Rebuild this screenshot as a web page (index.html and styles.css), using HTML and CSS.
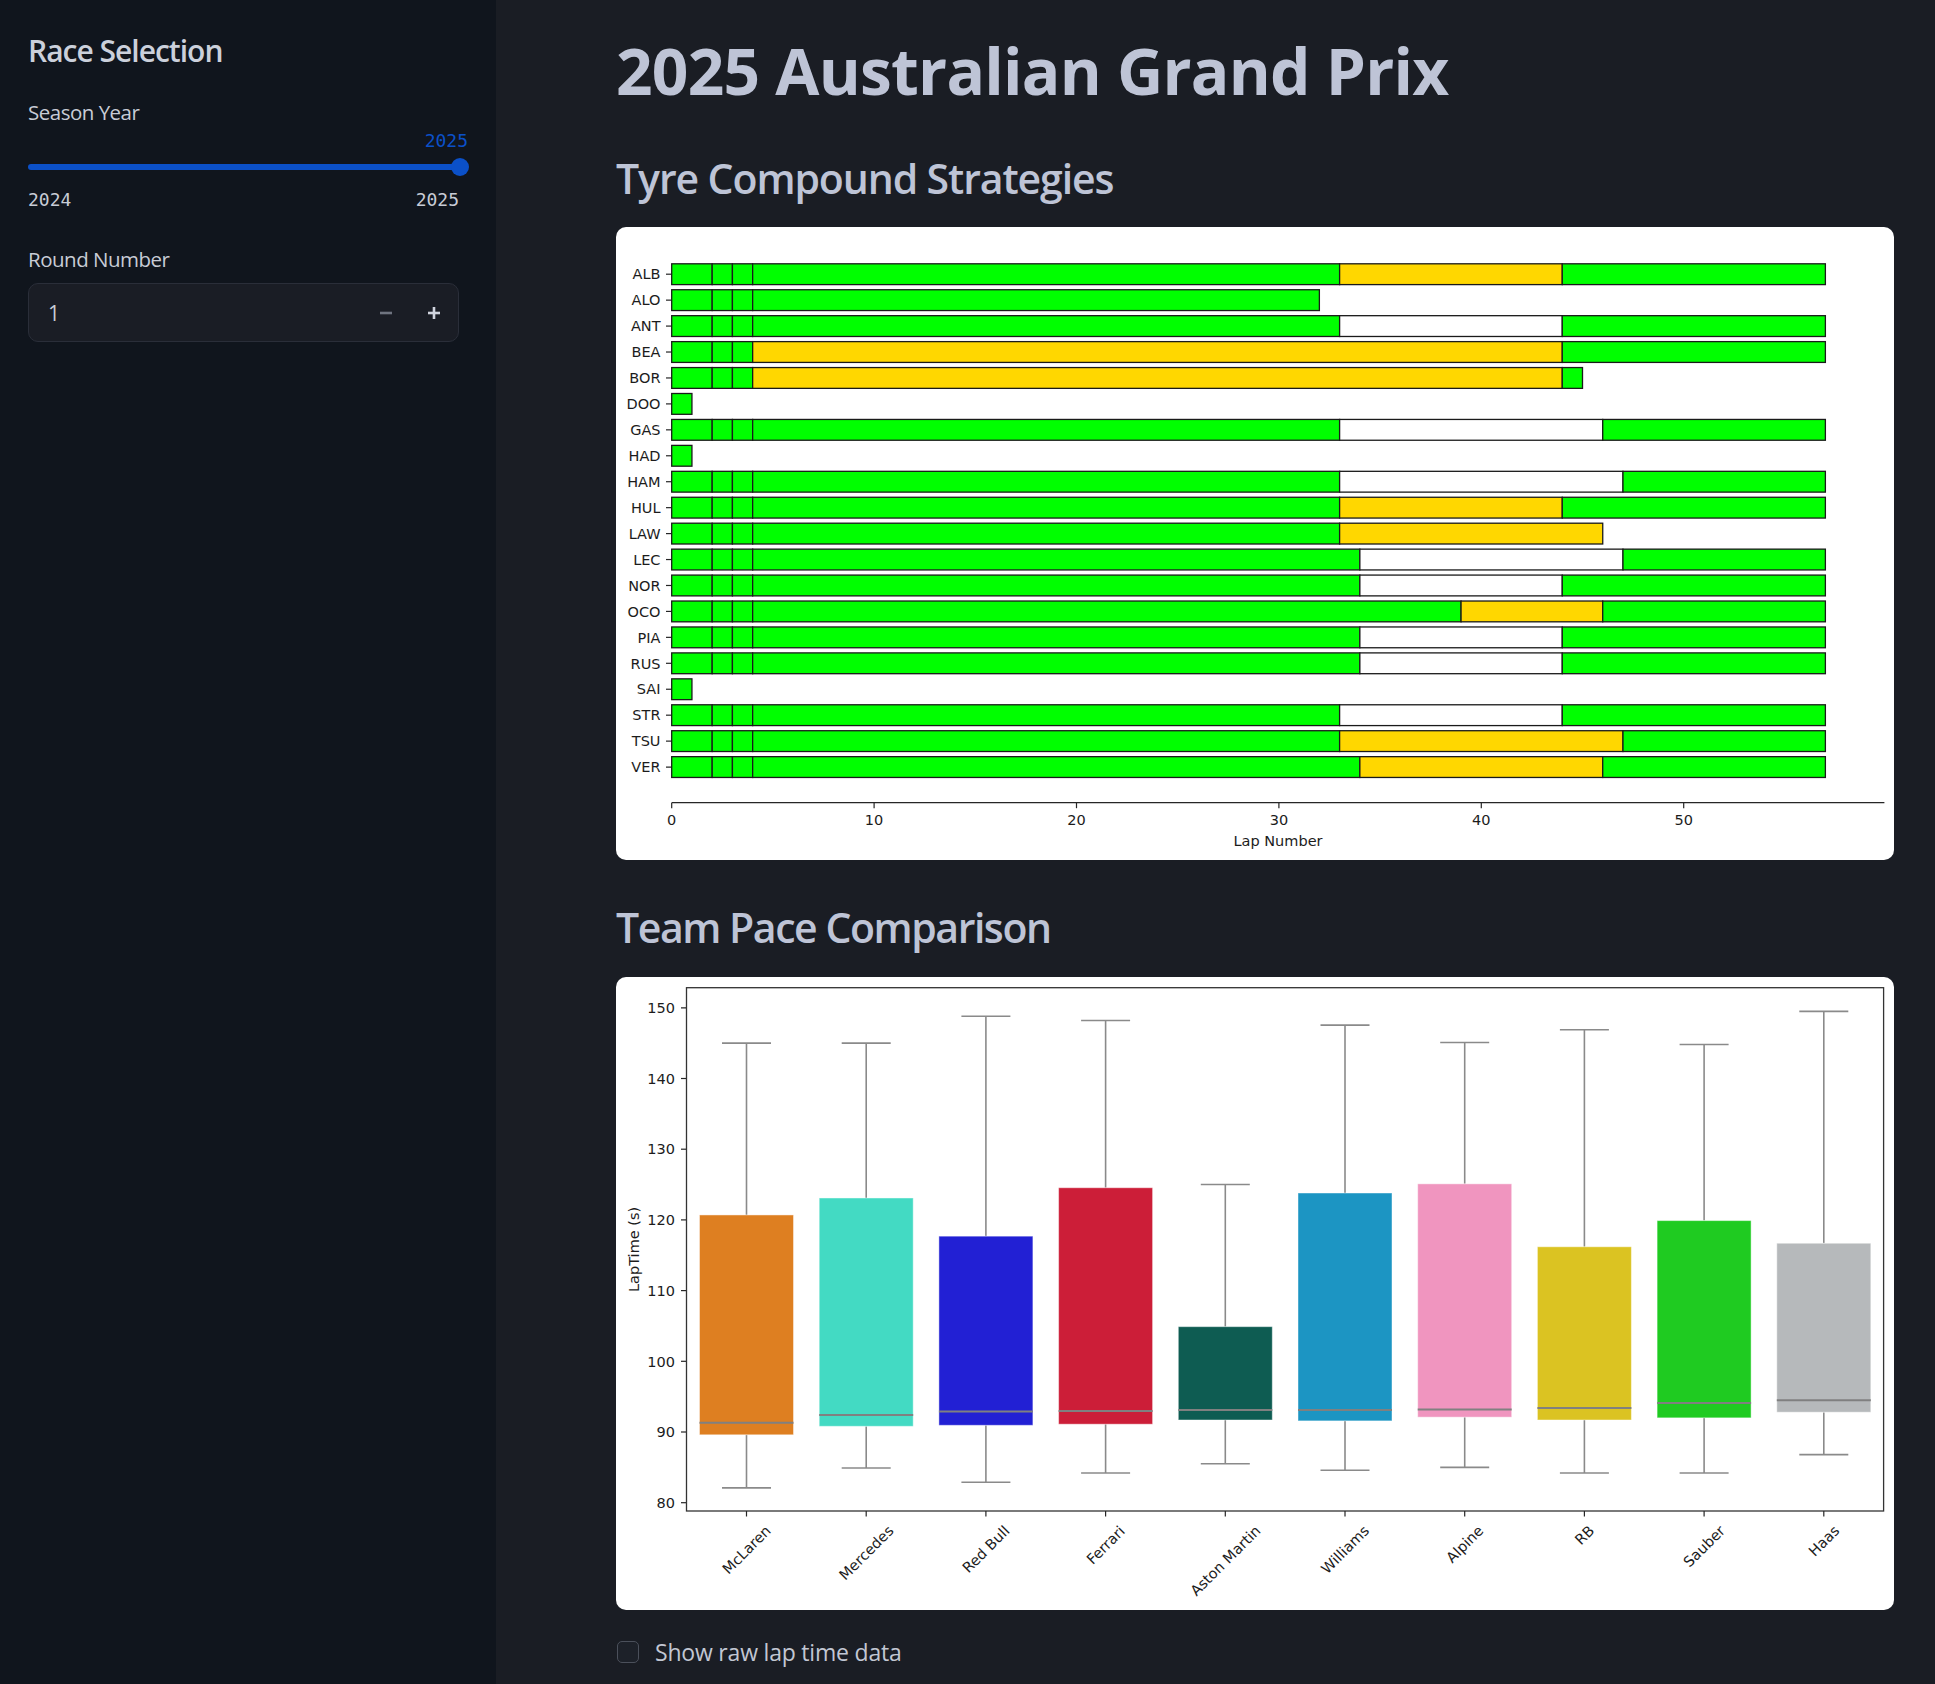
FILE: index.html
```html
<!DOCTYPE html>
<html lang="en">
<head>
<meta charset="utf-8">
<title>2025 Australian Grand Prix</title>
<link rel="stylesheet" href="styles.css">
</head>
<body>
<div class="app">
  <aside class="sidebar">
    <h2 class="sb-title">Race Selection</h2>

    <div class="field-label season">Season Year</div>
    <div class="slider">
      <div class="slider-value">2025</div>
      <div class="track"><span class="thumb"></span></div>
      <div class="slider-range"><span>2024</span><span>2025</span></div>
    </div>

    <div class="field-label round">Round Number</div>
    <div class="num-input">
      <span class="num-value">1</span>
      <span class="num-btns">
        <span class="num-btn minus"><svg width="14" height="14" viewBox="0 0 14 14"><line x1="1" y1="7" x2="13" y2="7"/></svg></span>
        <span class="num-btn plus"><svg width="14" height="14" viewBox="0 0 14 14"><line x1="1" y1="7" x2="13" y2="7"/><line x1="7" y1="1" x2="7" y2="13"/></svg></span>
      </span>
    </div>
  </aside>

  <main class="main">
    <h1 class="title">2025 Australian Grand Prix</h1>

    <h2 class="section tyre-h">Tyre Compound Strategies</h2>
    <div class="card">
      <svg class="chart tyre" width="1278" height="633" viewBox="0 0 1278 633">
        <defs>
          <g id="st">
            <rect class="g" x="55.7" y="-10.4" width="40.48" height="20.8"/>
            <rect class="g" x="96.18" y="-10.4" width="20.24" height="20.8"/>
            <rect class="g" x="116.42" y="-10.4" width="20.24" height="20.8"/>
          </g>
          <g id="tk"><line class="tick" x1="50" y1="0" x2="55.7" y2="0"/></g>
        </defs>

        <g transform="translate(0 47.2)"><use href="#tk"/><text class="yl" x="44.5" dy="0.36em">ALB</text><use href="#st"/><rect class="g" x="136.66" y="-10.4" width="586.96" height="20.8"/><rect class="y" x="723.62" y="-10.4" width="222.64" height="20.8"/><rect class="g" x="946.26" y="-10.4" width="263.12" height="20.8"/></g>
        <g transform="translate(0 73.14)"><use href="#tk"/><text class="yl" x="44.5" dy="0.36em">ALO</text><use href="#st"/><rect class="g" x="136.66" y="-10.4" width="566.72" height="20.8"/></g>
        <g transform="translate(0 99.08)"><use href="#tk"/><text class="yl" x="44.5" dy="0.36em">ANT</text><use href="#st"/><rect class="g" x="136.66" y="-10.4" width="586.96" height="20.8"/><rect class="w" x="723.62" y="-10.4" width="222.64" height="20.8"/><rect class="g" x="946.26" y="-10.4" width="263.12" height="20.8"/></g>
        <g transform="translate(0 125.02)"><use href="#tk"/><text class="yl" x="44.5" dy="0.36em">BEA</text><use href="#st"/><rect class="y" x="136.66" y="-10.4" width="809.6" height="20.8"/><rect class="g" x="946.26" y="-10.4" width="263.12" height="20.8"/></g>
        <g transform="translate(0 150.96)"><use href="#tk"/><text class="yl" x="44.5" dy="0.36em">BOR</text><use href="#st"/><rect class="y" x="136.66" y="-10.4" width="809.6" height="20.8"/><rect class="g" x="946.26" y="-10.4" width="20.24" height="20.8"/></g>
        <g transform="translate(0 176.9)"><use href="#tk"/><text class="yl" x="44.5" dy="0.36em">DOO</text><rect class="g" x="55.7" y="-10.4" width="20.24" height="20.8"/></g>
        <g transform="translate(0 202.84)"><use href="#tk"/><text class="yl" x="44.5" dy="0.36em">GAS</text><use href="#st"/><rect class="g" x="136.66" y="-10.4" width="586.96" height="20.8"/><rect class="w" x="723.62" y="-10.4" width="263.12" height="20.8"/><rect class="g" x="986.74" y="-10.4" width="222.64" height="20.8"/></g>
        <g transform="translate(0 228.78)"><use href="#tk"/><text class="yl" x="44.5" dy="0.36em">HAD</text><rect class="g" x="55.7" y="-10.4" width="20.24" height="20.8"/></g>
        <g transform="translate(0 254.72)"><use href="#tk"/><text class="yl" x="44.5" dy="0.36em">HAM</text><use href="#st"/><rect class="g" x="136.66" y="-10.4" width="586.96" height="20.8"/><rect class="w" x="723.62" y="-10.4" width="283.36" height="20.8"/><rect class="g" x="1006.98" y="-10.4" width="202.4" height="20.8"/></g>
        <g transform="translate(0 280.66)"><use href="#tk"/><text class="yl" x="44.5" dy="0.36em">HUL</text><use href="#st"/><rect class="g" x="136.66" y="-10.4" width="586.96" height="20.8"/><rect class="y" x="723.62" y="-10.4" width="222.64" height="20.8"/><rect class="g" x="946.26" y="-10.4" width="263.12" height="20.8"/></g>
        <g transform="translate(0 306.6)"><use href="#tk"/><text class="yl" x="44.5" dy="0.36em">LAW</text><use href="#st"/><rect class="g" x="136.66" y="-10.4" width="586.96" height="20.8"/><rect class="y" x="723.62" y="-10.4" width="263.12" height="20.8"/></g>
        <g transform="translate(0 332.54)"><use href="#tk"/><text class="yl" x="44.5" dy="0.36em">LEC</text><use href="#st"/><rect class="g" x="136.66" y="-10.4" width="607.2" height="20.8"/><rect class="w" x="743.86" y="-10.4" width="263.12" height="20.8"/><rect class="g" x="1006.98" y="-10.4" width="202.4" height="20.8"/></g>
        <g transform="translate(0 358.48)"><use href="#tk"/><text class="yl" x="44.5" dy="0.36em">NOR</text><use href="#st"/><rect class="g" x="136.66" y="-10.4" width="607.2" height="20.8"/><rect class="w" x="743.86" y="-10.4" width="202.4" height="20.8"/><rect class="g" x="946.26" y="-10.4" width="263.12" height="20.8"/></g>
        <g transform="translate(0 384.42)"><use href="#tk"/><text class="yl" x="44.5" dy="0.36em">OCO</text><use href="#st"/><rect class="g" x="136.66" y="-10.4" width="708.4" height="20.8"/><rect class="y" x="845.06" y="-10.4" width="141.68" height="20.8"/><rect class="g" x="986.74" y="-10.4" width="222.64" height="20.8"/></g>
        <g transform="translate(0 410.36)"><use href="#tk"/><text class="yl" x="44.5" dy="0.36em">PIA</text><use href="#st"/><rect class="g" x="136.66" y="-10.4" width="607.2" height="20.8"/><rect class="w" x="743.86" y="-10.4" width="202.4" height="20.8"/><rect class="g" x="946.26" y="-10.4" width="263.12" height="20.8"/></g>
        <g transform="translate(0 436.3)"><use href="#tk"/><text class="yl" x="44.5" dy="0.36em">RUS</text><use href="#st"/><rect class="g" x="136.66" y="-10.4" width="607.2" height="20.8"/><rect class="w" x="743.86" y="-10.4" width="202.4" height="20.8"/><rect class="g" x="946.26" y="-10.4" width="263.12" height="20.8"/></g>
        <g transform="translate(0 462.24)"><use href="#tk"/><text class="yl" x="44.5" dy="0.36em">SAI</text><rect class="g" x="55.7" y="-10.4" width="20.24" height="20.8"/></g>
        <g transform="translate(0 488.18)"><use href="#tk"/><text class="yl" x="44.5" dy="0.36em">STR</text><use href="#st"/><rect class="g" x="136.66" y="-10.4" width="586.96" height="20.8"/><rect class="w" x="723.62" y="-10.4" width="222.64" height="20.8"/><rect class="g" x="946.26" y="-10.4" width="263.12" height="20.8"/></g>
        <g transform="translate(0 514.12)"><use href="#tk"/><text class="yl" x="44.5" dy="0.36em">TSU</text><use href="#st"/><rect class="g" x="136.66" y="-10.4" width="586.96" height="20.8"/><rect class="y" x="723.62" y="-10.4" width="283.36" height="20.8"/><rect class="g" x="1006.98" y="-10.4" width="202.4" height="20.8"/></g>
        <g transform="translate(0 540.06)"><use href="#tk"/><text class="yl" x="44.5" dy="0.36em">VER</text><use href="#st"/><rect class="g" x="136.66" y="-10.4" width="607.2" height="20.8"/><rect class="y" x="743.86" y="-10.4" width="242.88" height="20.8"/><rect class="g" x="986.74" y="-10.4" width="222.64" height="20.8"/></g>

        <line class="axis" x1="55.7" y1="575.7" x2="1268.4" y2="575.7"/>
        <g class="xt">
          <line class="tick" x1="55.7" y1="575.7" x2="55.7" y2="581.2"/>
          <line class="tick" x1="258.1" y1="575.7" x2="258.1" y2="581.2"/>
          <line class="tick" x1="460.5" y1="575.7" x2="460.5" y2="581.2"/>
          <line class="tick" x1="662.9" y1="575.7" x2="662.9" y2="581.2"/>
          <line class="tick" x1="865.3" y1="575.7" x2="865.3" y2="581.2"/>
          <line class="tick" x1="1067.7" y1="575.7" x2="1067.7" y2="581.2"/>
          <text class="xl" x="55.7" y="598">0</text>
          <text class="xl" x="258.1" y="598">10</text>
          <text class="xl" x="460.5" y="598">20</text>
          <text class="xl" x="662.9" y="598">30</text>
          <text class="xl" x="865.3" y="598">40</text>
          <text class="xl" x="1067.7" y="598">50</text>
        </g>
        <text class="xl" x="662" y="619">Lap Number</text>
      </svg>
    </div>

    <h2 class="section pace-h">Team Pace Comparison</h2>
    <div class="card">
      <svg class="chart pace" width="1278" height="633" viewBox="0 0 1278 633">
        <g class="yt">
          <line class="tick" x1="65" y1="525.7" x2="70.5" y2="525.7"/><text class="yl" x="59" y="525.7" dy="0.36em">80</text>
          <line class="tick" x1="65" y1="455" x2="70.5" y2="455"/><text class="yl" x="59" y="455" dy="0.36em">90</text>
          <line class="tick" x1="65" y1="384.3" x2="70.5" y2="384.3"/><text class="yl" x="59" y="384.3" dy="0.36em">100</text>
          <line class="tick" x1="65" y1="313.6" x2="70.5" y2="313.6"/><text class="yl" x="59" y="313.6" dy="0.36em">110</text>
          <line class="tick" x1="65" y1="242.9" x2="70.5" y2="242.9"/><text class="yl" x="59" y="242.9" dy="0.36em">120</text>
          <line class="tick" x1="65" y1="172.2" x2="70.5" y2="172.2"/><text class="yl" x="59" y="172.2" dy="0.36em">130</text>
          <line class="tick" x1="65" y1="101.5" x2="70.5" y2="101.5"/><text class="yl" x="59" y="101.5" dy="0.36em">140</text>
          <line class="tick" x1="65" y1="30.8" x2="70.5" y2="30.8"/><text class="yl" x="59" y="30.8" dy="0.36em">150</text>
        </g>
        <text class="axlabel" x="18" y="272.4" dy="0.36em" transform="rotate(-90 18 272.4)">LapTime (s)</text>

        <!-- McLaren -->
        <g class="bx">
          <line class="wh" x1="130.5" y1="66.15" x2="130.5" y2="237.95"/><line class="wh" x1="106" y1="66.15" x2="155" y2="66.15"/>
          <line class="wh" x1="130.5" y1="457.8" x2="130.5" y2="510.85"/><line class="wh" x1="106" y1="510.85" x2="155" y2="510.85"/>
          <rect class="box" x="83.5" y="237.95" width="94" height="219.85" fill="#de7f21"/>
          <line class="med" x1="83.5" y1="445.8" x2="177.5" y2="445.8"/>
        </g>
        <!-- Mercedes -->
        <g class="bx">
          <line class="wh" x1="250.2" y1="66.15" x2="250.2" y2="220.98"/><line class="wh" x1="225.7" y1="66.15" x2="274.7" y2="66.15"/>
          <line class="wh" x1="250.2" y1="449.3" x2="250.2" y2="491.06"/><line class="wh" x1="225.7" y1="491.06" x2="274.7" y2="491.06"/>
          <rect class="box" x="203.2" y="220.98" width="94" height="228.32" fill="#43dac3"/>
          <line class="med" x1="203.2" y1="438" x2="297.2" y2="438"/>
        </g>
        <!-- Red Bull -->
        <g class="bx">
          <line class="wh" x1="369.9" y1="39.28" x2="369.9" y2="259.16"/><line class="wh" x1="345.4" y1="39.28" x2="394.4" y2="39.28"/>
          <line class="wh" x1="369.9" y1="448.3" x2="369.9" y2="505.2"/><line class="wh" x1="345.4" y1="505.2" x2="394.4" y2="505.2"/>
          <rect class="box" x="322.9" y="259.16" width="94" height="189.14" fill="#2220d4"/>
          <line class="med" x1="322.9" y1="434.5" x2="416.9" y2="434.5"/>
        </g>
        <!-- Ferrari -->
        <g class="bx">
          <line class="wh" x1="489.6" y1="43.53" x2="489.6" y2="210.73"/><line class="wh" x1="465.1" y1="43.53" x2="514.1" y2="43.53"/>
          <line class="wh" x1="489.6" y1="447.2" x2="489.6" y2="496"/><line class="wh" x1="465.1" y1="496" x2="514.1" y2="496"/>
          <rect class="box" x="442.6" y="210.73" width="94" height="236.47" fill="#cc1e38"/>
          <line class="med" x1="442.6" y1="434" x2="536.6" y2="434"/>
        </g>
        <!-- Aston Martin -->
        <g class="bx">
          <line class="wh" x1="609.3" y1="207.55" x2="609.3" y2="349.66"/><line class="wh" x1="584.8" y1="207.55" x2="633.8" y2="207.55"/>
          <line class="wh" x1="609.3" y1="443" x2="609.3" y2="486.8"/><line class="wh" x1="584.8" y1="486.8" x2="633.8" y2="486.8"/>
          <rect class="box" x="562.3" y="349.66" width="94" height="93.34" fill="#0e5c52"/>
          <line class="med" x1="562.3" y1="433.1" x2="656.3" y2="433.1"/>
        </g>
        <!-- Williams -->
        <g class="bx">
          <line class="wh" x1="729" y1="48.12" x2="729" y2="216"/><line class="wh" x1="704.5" y1="48.12" x2="753.5" y2="48.12"/>
          <line class="wh" x1="729" y1="443.9" x2="729" y2="493.2"/><line class="wh" x1="704.5" y1="493.2" x2="753.5" y2="493.2"/>
          <rect class="box" x="682" y="216" width="94" height="227.9" fill="#1c95c3"/>
          <line class="med" x1="682" y1="433.1" x2="776" y2="433.1"/>
        </g>
        <!-- Alpine -->
        <g class="bx">
          <line class="wh" x1="848.7" y1="65.44" x2="848.7" y2="206.84"/><line class="wh" x1="824.2" y1="65.44" x2="873.2" y2="65.44"/>
          <line class="wh" x1="848.7" y1="440.15" x2="848.7" y2="490.35"/><line class="wh" x1="824.2" y1="490.35" x2="873.2" y2="490.35"/>
          <rect class="box" x="801.7" y="206.84" width="94" height="233.31" fill="#f095bf"/>
          <line class="med" x1="801.7" y1="432.4" x2="895.7" y2="432.4"/>
        </g>
        <!-- RB -->
        <g class="bx">
          <line class="wh" x1="968.4" y1="52.72" x2="968.4" y2="269.77"/><line class="wh" x1="943.9" y1="52.72" x2="992.9" y2="52.72"/>
          <line class="wh" x1="968.4" y1="443" x2="968.4" y2="496"/><line class="wh" x1="943.9" y1="496" x2="992.9" y2="496"/>
          <rect class="box" x="921.4" y="269.77" width="94" height="173.23" fill="#dbc322"/>
          <line class="med" x1="921.4" y1="430.96" x2="1015.4" y2="430.96"/>
        </g>
        <!-- Sauber -->
        <g class="bx">
          <line class="wh" x1="1088.1" y1="67.56" x2="1088.1" y2="243.6"/><line class="wh" x1="1063.6" y1="67.56" x2="1112.6" y2="67.56"/>
          <line class="wh" x1="1088.1" y1="440.86" x2="1088.1" y2="496"/><line class="wh" x1="1063.6" y1="496" x2="1112.6" y2="496"/>
          <rect class="box" x="1041.1" y="243.6" width="94" height="197.26" fill="#1fcb21"/>
          <line class="med" x1="1041.1" y1="426" x2="1135.1" y2="426"/>
        </g>
        <!-- Haas -->
        <g class="bx">
          <line class="wh" x1="1207.8" y1="34.33" x2="1207.8" y2="266.23"/><line class="wh" x1="1183.3" y1="34.33" x2="1232.3" y2="34.33"/>
          <line class="wh" x1="1207.8" y1="435.2" x2="1207.8" y2="477.6"/><line class="wh" x1="1183.3" y1="477.6" x2="1232.3" y2="477.6"/>
          <rect class="box" x="1160.8" y="266.23" width="94" height="168.97" fill="#b6b9bb"/>
          <line class="med" x1="1160.8" y1="423.2" x2="1254.8" y2="423.2"/>
        </g>

        <rect class="frame" x="70.5" y="10.7" width="1197.1" height="523.3"/>

        <g class="xt">
          <line class="tick" x1="130.5" y1="534" x2="130.5" y2="539.5"/>
          <line class="tick" x1="250.2" y1="534" x2="250.2" y2="539.5"/>
          <line class="tick" x1="369.9" y1="534" x2="369.9" y2="539.5"/>
          <line class="tick" x1="489.6" y1="534" x2="489.6" y2="539.5"/>
          <line class="tick" x1="609.3" y1="534" x2="609.3" y2="539.5"/>
          <line class="tick" x1="729" y1="534" x2="729" y2="539.5"/>
          <line class="tick" x1="848.7" y1="534" x2="848.7" y2="539.5"/>
          <line class="tick" x1="968.4" y1="534" x2="968.4" y2="539.5"/>
          <line class="tick" x1="1088.1" y1="534" x2="1088.1" y2="539.5"/>
          <line class="tick" x1="1207.8" y1="534" x2="1207.8" y2="539.5"/>
          <text class="rl" x="130.5" y="572.7" dy="0.36em" transform="rotate(-45 130.5 572.7)">McLaren</text>
          <text class="rl" x="250.2" y="575.7" dy="0.36em" transform="rotate(-45 250.2 575.7)">Mercedes</text>
          <text class="rl" x="369.9" y="572.2" dy="0.36em" transform="rotate(-45 369.9 572.2)">Red Bull</text>
          <text class="rl" x="489.6" y="568" dy="0.36em" transform="rotate(-45 489.6 568)">Ferrari</text>
          <text class="rl" x="609.3" y="583.6" dy="0.36em" transform="rotate(-45 609.3 583.6)">Aston Martin</text>
          <text class="rl" x="729" y="572.5" dy="0.36em" transform="rotate(-45 729 572.5)">Williams</text>
          <text class="rl" x="848.7" y="567" dy="0.36em" transform="rotate(-45 848.7 567)">Alpine</text>
          <text class="rl" x="968.4" y="558" dy="0.36em" transform="rotate(-45 968.4 558)">RB</text>
          <text class="rl" x="1088.1" y="569.2" dy="0.36em" transform="rotate(-45 1088.1 569.2)">Sauber</text>
          <text class="rl" x="1207.8" y="563.8" dy="0.36em" transform="rotate(-45 1207.8 563.8)">Haas</text>
        </g>
      </svg>
    </div>

    <label class="check">
      <span class="check-box"></span>
      <span class="check-label">Show raw lap time data</span>
    </label>
  </main>
</div>
</body>
</html>
```

FILE: styles.css
```css
html, body {
  margin: 0;
  padding: 0;
}

body {
  background: #1a1d24;
  font-family: "Open Sans", "Noto Sans", sans-serif;
  color: #c6cbd6;
}

.app {
  display: flex;
  min-height: 1684px;
}

/* ---------- Sidebar ---------- */
.sidebar {
  flex: none;
  width: 496px;
  box-sizing: border-box;
  padding: 36px 37px 0 28px;
  background: #10151d;
}

.sb-title {
  margin: 0;
  font-size: 30px;
  line-height: 1;
  font-weight: 600;
  letter-spacing: -1px;
  color: #cbd0db;
}

.field-label {
  font-size: 20.5px;
  line-height: 1;
  letter-spacing: -0.5px;
  color: #c8ccd6;
}

.field-label.season {
  margin-top: 36px;
}

.field-label.round {
  margin-top: 40px;
}

.slider {
  margin-top: 9px;
  width: 431px;
}

.slider-value {
  font-family: "DejaVu Sans Mono", "Liberation Mono", monospace;
  font-size: 18px;
  line-height: 1;
  color: #0b50c8;
  text-align: right;
  margin-right: -9px;
}

.track {
  position: relative;
  margin-top: 14px;
  height: 6px;
  width: 434px;
  border-radius: 3px;
  background: #0b50c8;
}

.thumb {
  position: absolute;
  right: -7px;
  top: -6px;
  width: 18px;
  height: 18px;
  border-radius: 50%;
  background: #0b50c8;
}

.slider-range {
  display: flex;
  justify-content: space-between;
  margin-top: 21px;
  font-family: "DejaVu Sans Mono", "Liberation Mono", monospace;
  font-size: 18px;
  line-height: 1;
  color: #c8ccd6;
}

.num-input {
  margin-top: 14px;
  width: 431px;
  height: 59px;
  box-sizing: border-box;
  border: 1px solid #2a2e39;
  border-radius: 10px;
  background: #1a1d25;
  display: flex;
  align-items: center;
  justify-content: space-between;
  padding-left: 19px;
}

.num-value {
  font-size: 21px;
  color: #c8ccd6;
}

.num-btns {
  display: flex;
  height: 100%;
}

.num-btn {
  width: 48px;
  height: 100%;
  display: flex;
  align-items: center;
  justify-content: center;
}

.num-btn svg line {
  stroke-width: 2.6;
  stroke-linecap: butt;
}

.num-btn.minus svg line {
  stroke: #6f7480;
}

.num-btn.plus svg line {
  stroke: #d0d4de;
}

/* ---------- Main ---------- */
.main {
  flex: none;
  width: 1278px;
  padding-left: 120px;
}

.title {
  margin: 39px 0 0;
  font-size: 64px;
  line-height: 1;
  font-weight: 700;
  letter-spacing: -0.75px;
  color: #bec4d6;
}

.section {
  margin: 0;
  font-size: 41px;
  line-height: 1;
  font-weight: 600;
  letter-spacing: -1.1px;
  color: #bec4d6;
}

.tyre-h {
  margin-top: 55px;
}

.pace-h {
  margin-top: 47px;
  letter-spacing: -1.45px;
}

.card {
  margin-top: 28px;
  width: 1278px;
  height: 633px;
  background: #ffffff;
  border-radius: 10px;
  overflow: hidden;
}

.pace-h + .card {
  margin-top: 29px;
}

.chart {
  display: block;
  font-family: "DejaVu Sans", sans-serif;
}

.chart text {
  font-size: 14.5px;
  fill: #1c1c1c;
}

.chart .yl {
  text-anchor: end;
}

.chart .xl,
.chart .rl,
.chart .axlabel {
  text-anchor: middle;
}

.chart .tick,
.chart .axis {
  stroke: #262626;
  stroke-width: 1.2;
}

.tyre rect {
  stroke: #1a1a1a;
  stroke-width: 1.3;
}

.tyre .g { fill: #00ff00; }
.tyre .y { fill: #ffd700; }
.tyre .w { fill: #ffffff; }

.pace .frame {
  fill: none;
  stroke: #333333;
  stroke-width: 1.3;
}

.pace .wh {
  stroke: #8a8a8a;
  stroke-width: 1.6;
}

.pace .med {
  stroke: #808080;
  stroke-width: 2;
}

.pace .box {
  stroke: #ffffff;
  stroke-opacity: 0.45;
  stroke-width: 1;
}

/* ---------- Checkbox ---------- */
.check {
  display: flex;
  align-items: center;
  gap: 16px;
  margin-top: 31px;
  margin-left: 1px;
  height: 22px;
}

.check-box {
  flex: none;
  width: 22px;
  height: 22px;
  box-sizing: border-box;
  border: 1px solid #4b505b;
  border-radius: 5px;
  background: #1d2129;
}

.check-label {
  font-size: 23px;
  line-height: 1;
  letter-spacing: -0.2px;
  color: #c2c7d3;
}
```
